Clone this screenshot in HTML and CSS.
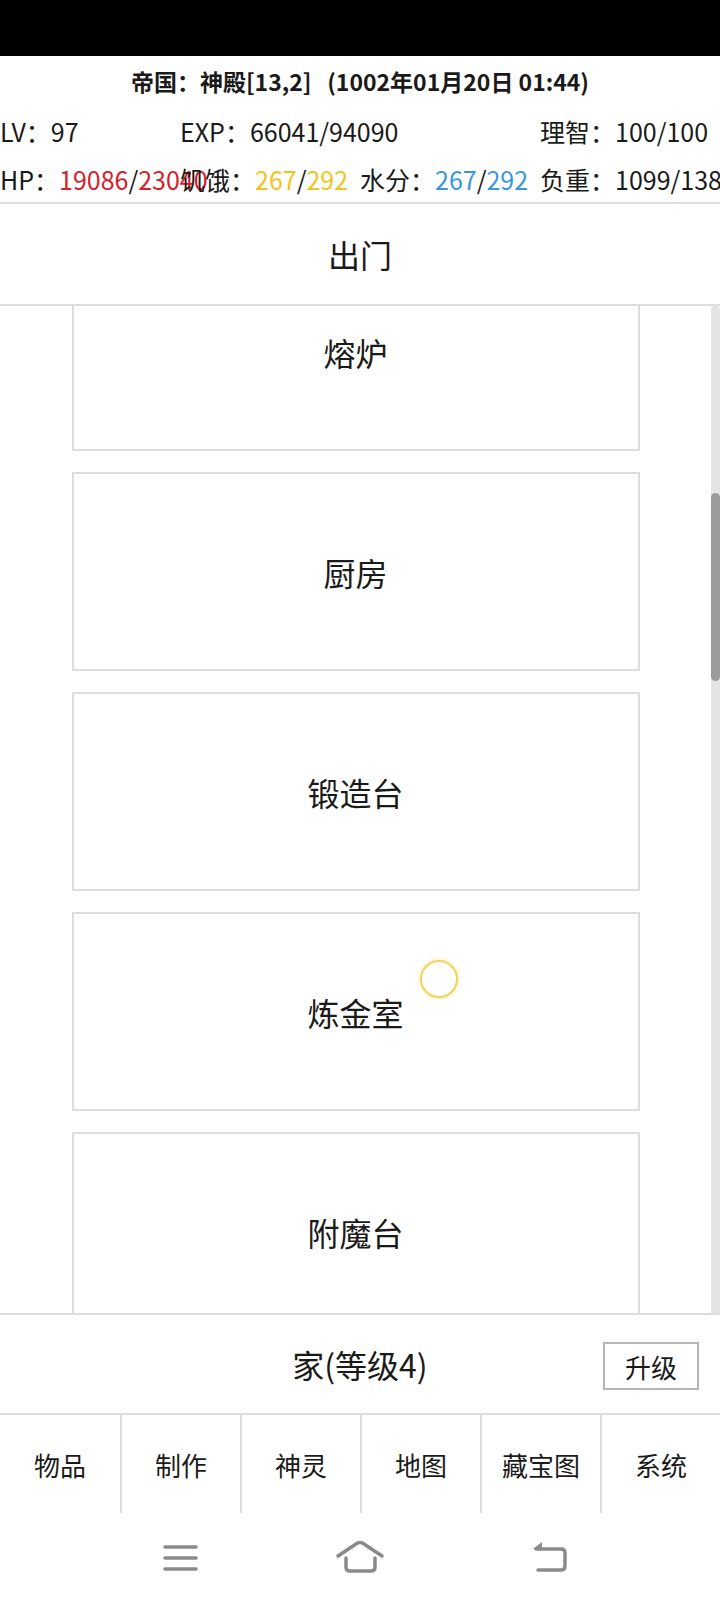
FILE: index.html
```html
<!DOCTYPE html>
<html lang="zh-CN">
<head>
  <meta charset="UTF-8">
  <title>家</title>
  <link rel="stylesheet" href="styles.css">
</head>
<body>

  <div class="statusbar"></div>

  <div class="info">
    <div class="info-title">帝国：神殿[13,2]&nbsp;&nbsp;&nbsp;(1002年01月20日 01:44)</div>
    <div class="info-row">
      <span>LV：97</span>
      <span>EXP：66041/94090</span>
      <span class="col4">理智：100/100</span>
    </div>
    <div class="info-row">
      <span>HP：<span class="red">19086</span>/<span class="red">23040</span></span>
      <span>饥饿：<span class="gold">267</span>/<span class="gold">292</span></span>
      <span>水分：<span class="blue">267</span>/<span class="blue">292</span></span>
      <span>负重：1099/1380</span>
    </div>
  </div>

  <div class="go-out">出门</div>

  <div class="rooms">
    <div class="room-list">
      <div class="room-scroll">
        <div class="room">熔炉</div>
        <div class="room">厨房</div>
        <div class="room">锻造台</div>
        <div class="room">炼金室</div>
        <div class="room">附魔台</div>
      </div>
    </div>
    <div class="scroll-track"><div class="scroll-thumb"></div></div>
  </div>

  <div class="home-bar">
    <span></span>
    <span class="home-title">家(等级4)</span>
    <button class="upgrade">升级</button>
  </div>

  <div class="tabs">
    <div class="tab">物品</div>
    <div class="tab">制作</div>
    <div class="tab">神灵</div>
    <div class="tab">地图</div>
    <div class="tab">藏宝图</div>
    <div class="tab">系统</div>
  </div>

  <div class="sysnav">
    <svg width="720" height="87" viewBox="0 0 720 87">
      <g fill="none" stroke="#8a8a8a" stroke-width="3.5" stroke-linecap="round" stroke-linejoin="round">
        <path d="M165 34 H196 M165 45 H196 M165 56 H196"/>
        <path d="M338 43 L356 31 Q360 28 364 31 L382 43"/>
        <path d="M346 45 V54 Q346 58 350 58 H371 Q375 58 375 54 V45"/>
        <path d="M538 57 H561 Q565 57 565 53 V40 Q565 36 561 36 H536"/>
      </g>
      <path d="M533 36 L542 29 L542 37 Z" fill="#8a8a8a"/>
    </svg>
  </div>

  <div class="touch-dot"></div>

</body>
</html>
```

FILE: styles.css
```css
body {
  margin: 0;
  width: 720px;
  height: 1600px;
  overflow: hidden;
  position: relative;
  background: #fff;
  color: #1a1a1a;
  font-family: "Noto Sans CJK SC", "Noto Sans", sans-serif;
}

.statusbar {
  height: 56px;
  background: #000;
}

.info {
  border-bottom: 2px solid #ddd;
}

.info-title {
  height: 50px;
  display: flex;
  align-items: center;
  justify-content: center;
  font-size: 23px;
  font-weight: bold;
  white-space: nowrap;
}

.info-row {
  height: 50px;
  display: grid;
  grid-template-columns: repeat(4, 180px);
  align-items: center;
  font-size: 25px;
  white-space: nowrap;
}

.info-row:last-child {
  height: 46px;
}

.info-row .col4 {
  grid-column: 4;
}

.red { color: #d7202b; }
.gold { color: #f0c520; }
.blue { color: #3a97dc; }

.go-out {
  height: 100px;
  display: flex;
  align-items: center;
  justify-content: center;
  font-size: 32px;
  border-bottom: 2px solid #ddd;
}

.rooms {
  height: 1007px;
  display: flex;
  border-bottom: 2px solid #ddd;
}

.room-list {
  flex: 1;
  overflow: hidden;
}

.room-scroll {
  margin-top: -54px;
}

.room {
  box-sizing: border-box;
  width: 568px;
  height: 199px;
  margin: 0 auto 21px;
  border: 2px solid #ddd;
  display: flex;
  align-items: center;
  justify-content: center;
  font-size: 32px;
}

.scroll-track {
  width: 9px;
  background: #e4e4e4;
  border-radius: 4px 4px 0 0;
}

.scroll-thumb {
  margin-top: 187px;
  height: 188px;
  background: #9b9b9b;
  border-radius: 5px;
}

.home-bar {
  height: 98px;
  display: grid;
  grid-template-columns: 1fr auto 1fr;
  align-items: center;
  border-bottom: 2px solid #ddd;
}

.home-title {
  font-size: 32px;
}

.upgrade {
  justify-self: end;
  margin: 4px 21px 0 0;
  width: 96px;
  height: 48px;
  padding: 0;
  background: #fff;
  border: 2px solid #b5b5b5;
  font-family: inherit;
  font-size: 26px;
  color: #1a1a1a;
}

.tabs {
  height: 98px;
  display: grid;
  grid-template-columns: repeat(6, 1fr);
}

.tab {
  display: flex;
  align-items: center;
  justify-content: center;
  font-size: 26px;
}

.tab + .tab {
  border-left: 2px solid #ddd;
}

.sysnav {
  height: 87px;
}

.sysnav svg {
  display: block;
}

.touch-dot {
  position: absolute;
  left: 420px;
  top: 960px;
  width: 34px;
  height: 34px;
  border: 2px solid #f2d35a;
  border-radius: 50%;
  box-shadow: 0 0 4px rgba(242, 200, 60, 0.55);
}
```
